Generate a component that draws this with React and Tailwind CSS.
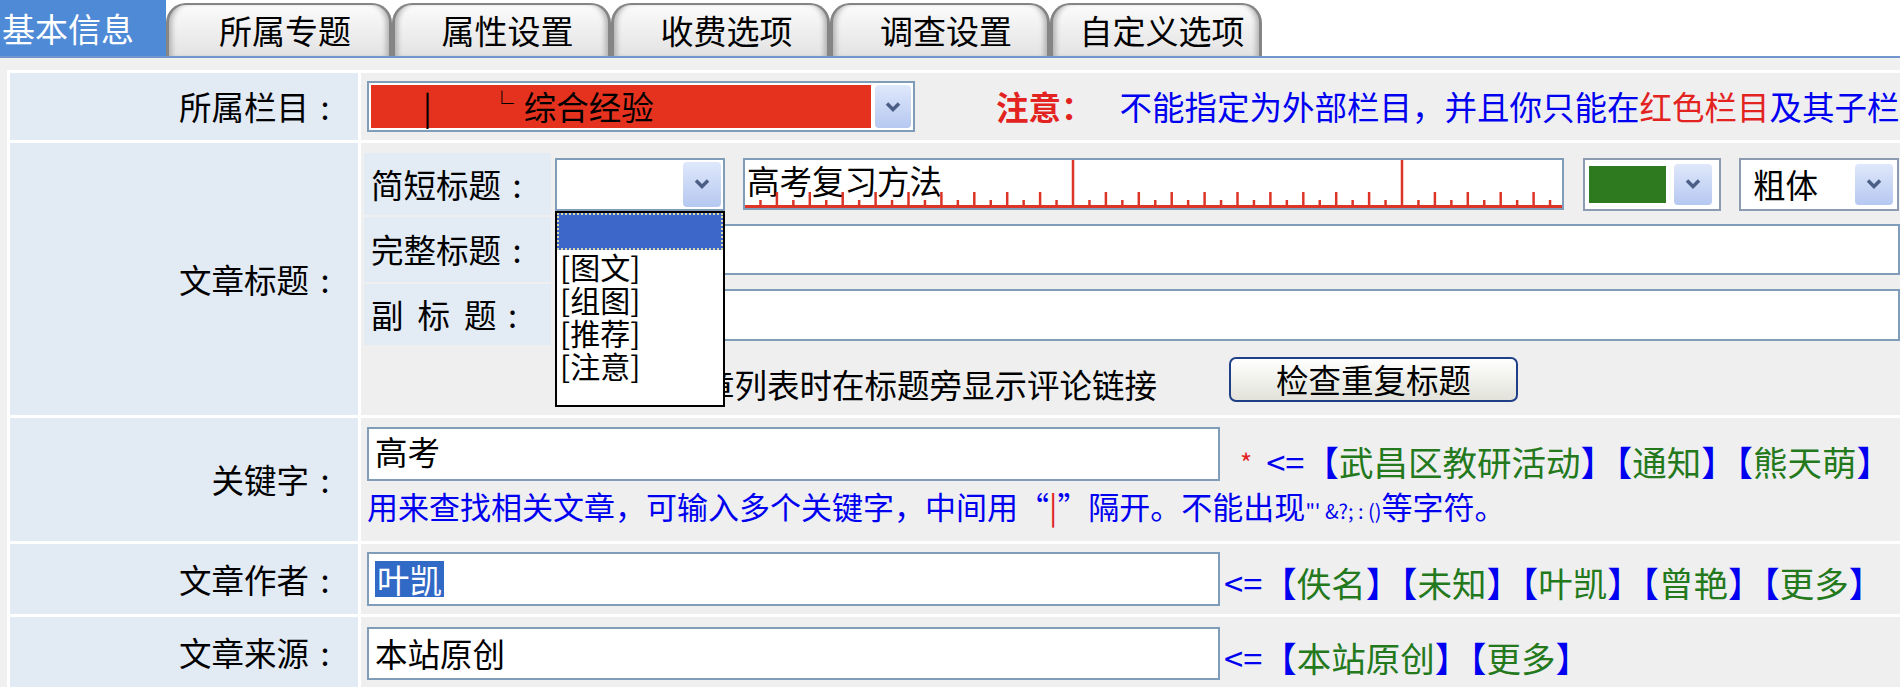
import React from "react";

function ChevronBtn({ className }) {
  return (
    <div className={`flex items-center justify-center rounded-[4px] bg-linear-to-b from-[#dfe8fb] to-[#b6c8f0] ${className}`}>
      <svg width="18" height="12" viewBox="0 0 18 12">
        <polyline points="3,2.5 9,8.5 15,2.5" fill="none" stroke="#4b5f86" strokeWidth="3.5" />
      </svg>
    </div>
  );
}

function Tab({ children, className }) {
  return (
    <div
      className={`mt-[3px] h-[53px] rounded-t-[20px] border-x-[3px] border-t-[2px] border-[#858585] bg-linear-to-b from-[#fbfbfb] to-[#e3e3e3] shadow-[inset_6px_0_5px_-3px_#b4b4b4,inset_-6px_0_5px_-3px_#b4b4b4] flex items-center justify-center pl-[12px] text-[33px] ${className}`}
    >
      {children}
    </div>
  );
}

function Label({ children }) {
  return (
    <div className="bg-[#e2eaf4] flex items-center justify-end pr-[17px]">
      <span>{children}</span>
      <span className="w-[32px] flex justify-center">:</span>
    </div>
  );
}

function Ruler() {
  const ticks = [];
  for (let i = 0; i < 50; i++) {
    const x = -1 + i * 16.45;
    if (x < 0) continue;
    const major = i % 20 === 0;
    const tall = i % 2 === 0;
    const y1 = major ? 0 : tall ? 32 : 40;
    ticks.push(<line key={i} x1={x} y1={y1} x2={x} y2={47} stroke="#dc3527" strokeWidth="2.5" />);
  }
  return (
    <svg className="absolute left-0 top-0 pointer-events-none" width="817" height="48" viewBox="0 0 817 48">
      {ticks}
      <line x1="0" y1="46.5" x2="817" y2="46.5" stroke="#dc3527" strokeWidth="3" />
    </svg>
  );
}

function B({ children }) {
  return <span className="text-[#0000f0]">{children}</span>;
}
function G({ children }) {
  return <span className="text-[#23791c]">{children}</span>;
}

function Tags({ items }) {
  return (
    <span className="text-[34.5px]">
      <B>&lt;=</B>
      {items.map((t) => (
        <span key={t}>
          <B>【</B>
          <G>{t}</G>
          <B>】</B>
        </span>
      ))}
    </span>
  );
}

export default function App() {
  return (
    <div className="w-[1900px] h-[687px] overflow-hidden bg-[#f0f0f0] font-['Noto_Sans_CJK_SC','Noto_Sans',sans-serif] text-[32.5px] leading-none text-black whitespace-nowrap">
      {/* Tabs */}
      <div className="h-[56px] bg-white flex items-stretch">
        <div className="w-[166px] bg-[#4f8ad6] text-white text-[33px] flex items-center pl-[2px]">基本信息</div>
        <Tab className="w-[226px]">所属专题</Tab>
        <Tab className="w-[219px]">属性设置</Tab>
        <Tab className="w-[219px]">收费选项</Tab>
        <Tab className="w-[220px]">调查设置</Tab>
        <Tab className="w-[212px]">自定义选项</Tab>
      </div>
      <div className="h-[2px] bg-[#6f96cf]"></div>
      <div className="h-[12px] bg-[#f0f0f0]"></div>

      <div className="ml-[7px] pl-[3px] pt-[3px] bg-white grid grid-cols-[348px_minmax(0,1fr)] grid-rows-[67px_272px_123px_70px_70px] gap-[3px]">
        {/* Row 1 */}
        <Label>所属栏目</Label>
        <div className="bg-[#efefef] flex items-center pl-[6px] overflow-hidden">
          <div className="w-[548px] h-[51px] shrink-0 border-2 border-[#7f9db9] bg-white flex items-stretch p-[2px] gap-[4px]">
            <div className="flex-1 bg-[#e5321f] flex items-center">
              <span className="ml-[52px]">|</span>
              <span className="ml-[58px] text-[24px] -mt-[10px]">└</span>
              <span className="ml-[10px]">综合经验</span>
            </div>
            <ChevronBtn className="w-[36px]" />
          </div>
          <span className="ml-[81px] text-[#e3231f] font-bold">注意：</span>
          <span className="ml-[26px] text-[#0000f0]">
            不能指定为外部栏目，并且你只能在<span className="text-[#e3231f]">红色栏目</span>及其子栏目中添加文章。
          </span>
        </div>

        {/* Row 2 */}
        <Label>文章标题</Label>
        <div className="bg-[#efefef] pl-[3px] pt-[10px] overflow-hidden">
          <div className="grid grid-cols-[187px_minmax(0,1fr)] grid-rows-[62px_65px_61px_65px] gap-x-[4px] gap-y-[2px]">
            <div className="bg-[#e3ebf5] flex items-center pl-[7px]">简短标题<span className="w-[32px] flex justify-center">:</span></div>
            <div className="flex items-center">
              <div className="relative w-[170px] h-[53px] shrink-0">
                <div className="w-full h-full border-2 border-[#7f9db9] bg-white flex justify-end p-[2px]">
                  <ChevronBtn className="w-[38px]" />
                </div>
                <div className="absolute left-0 top-full w-[170px] h-[196px] border-2 border-black bg-white z-10 text-[30px]">
                  <div className="h-[37px] bg-[#3d67c9] border-2 border-dotted border-[#d8d8b0]"></div>
                  <div className="h-[33px] flex items-center pl-[3px]">[图文]</div>
                  <div className="h-[33px] flex items-center pl-[3px]">[组图]</div>
                  <div className="h-[33px] flex items-center pl-[3px]">[推荐]</div>
                  <div className="h-[33px] flex items-center pl-[3px]">[注意]</div>
                </div>
              </div>
              <div className="relative ml-[18px] w-[821px] h-[52px] shrink-0 border-2 border-[#7f9db9] bg-white flex items-center pl-[2px]">
                <span className="-mt-[8px]">高考复习方法</span>
                <Ruler />
              </div>
              <div className="ml-[19px] w-[138px] h-[53px] shrink-0 border-2 border-[#8d9bb0] bg-white flex items-stretch p-[4px] gap-[8px]">
                <div className="w-[77px] bg-[#2e7a1f] my-[2px]"></div>
                <ChevronBtn className="w-[38px]" />
              </div>
              <div className="ml-[18px] w-[160px] h-[53px] shrink-0 border-2 border-[#8d9bb0] bg-white flex items-stretch p-[4px]">
                <span className="flex items-center pl-[8px] flex-1">粗体</span>
                <ChevronBtn className="w-[38px]" />
              </div>
            </div>

            <div className="bg-[#e3ebf5] flex items-center pl-[7px]">完整标题<span className="w-[32px] flex justify-center">:</span></div>
            <div className="flex items-center">
              <div className="w-full h-[51px] border-2 border-[#7f9db9] bg-white"></div>
            </div>

            <div className="bg-[#e3ebf5] flex items-center pl-[7px]">
              <span>副</span>
              <span className="ml-[14px]">标</span>
              <span className="ml-[14px]">题</span>
              <span className="w-[32px] flex justify-center">:</span>
            </div>
            <div className="flex items-center">
              <div className="w-full h-[52px] border-2 border-[#7f9db9] bg-white"></div>
            </div>

            <div></div>
            <div className="flex items-center">
              <input type="checkbox" className="ml-[52px] w-[22px] h-[22px] mt-[8px]" />
              <span className="ml-[8px] mt-[10px]">在文章列表时在标题旁显示评论链接</span>
              <div className="ml-[72px] w-[289px] h-[45px] rounded-[7px] border-2 border-[#1f3f86] bg-linear-to-b from-[#ffffff] to-[#e2e2da] flex items-center justify-center">
                检查重复标题
              </div>
            </div>
          </div>
        </div>

        {/* Row 3 */}
        <Label>关键字</Label>
        <div className="bg-[#efefef] pl-[6px] pt-[9px] overflow-hidden">
          <div className="flex items-end">
            <div className="w-[853px] h-[54px] shrink-0 border-2 border-[#7f9db9] bg-white flex items-center pl-[6px]">
              <span className="-mt-[6px]">高考</span>
            </div>
            <span className="ml-[20px] mb-[6px] text-[#e3231f] text-[26px]">*</span>
            <span className="ml-[14px] mb-[3px]">
              <Tags items={["武昌区教研活动", "通知", "熊天萌"]} />
            </span>
          </div>
          <div className="mt-[9px] text-[#0000f0] text-[31px]">
            用来查找相关文章，可输入多个关键字，中间用“<span className="text-[#e3231f]">|</span>”隔开。不能出现
            <span className="text-[20px]">"' &amp;?; : ()</span>等字符。
          </div>
        </div>

        {/* Row 4 */}
        <Label>文章作者</Label>
        <div className="bg-[#efefef] pl-[6px] flex items-center overflow-hidden">
          <div className="w-[853px] h-[54px] shrink-0 border-2 border-[#7f9db9] bg-white flex items-center pl-[6px]">
            <span className="bg-[#3169c6] text-white h-[36px] px-[2px] flex items-center">叶凯</span>
          </div>
          <span className="ml-[4px] mt-[6px]">
            <Tags items={["佚名", "未知", "叶凯", "曾艳", "更多"]} />
          </span>
        </div>

        {/* Row 5 */}
        <Label>文章来源</Label>
        <div className="bg-[#efefef] pl-[6px] pt-[10px] flex items-start overflow-hidden">
          <div className="w-[853px] h-[53px] shrink-0 border-2 border-[#7f9db9] bg-white flex items-center pl-[6px]">
            <span>本站原创</span>
          </div>
          <span className="ml-[4px] mt-[13px]">
            <Tags items={["本站原创", "更多"]} />
          </span>
        </div>
      </div>
    </div>
  );
}
